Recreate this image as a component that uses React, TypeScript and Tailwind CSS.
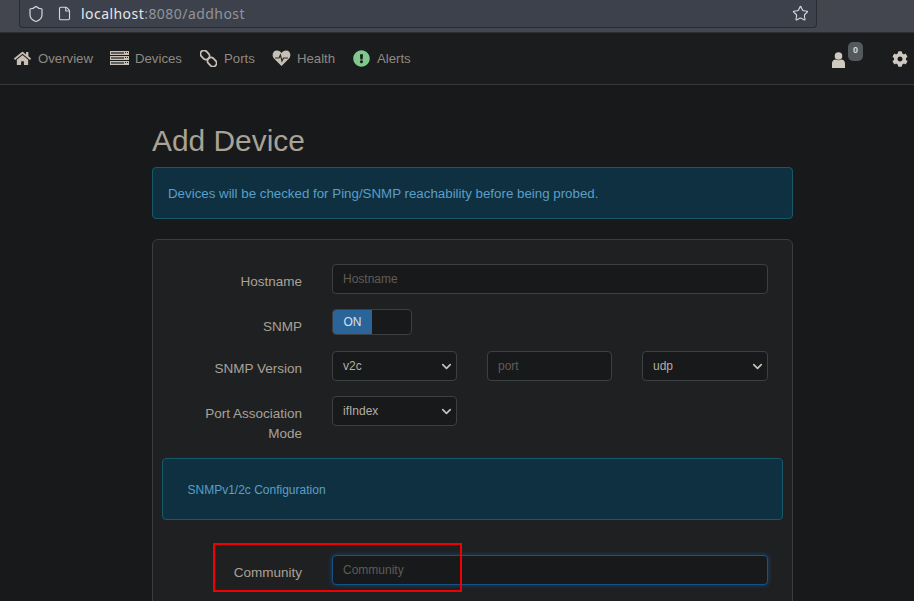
import { ChevronDown, File, Shield, Star } from "lucide-react";
import { FaCog, FaExclamationCircle, FaHome } from "react-icons/fa";

const ServerIcon = () => (
  <svg width="19" height="14" viewBox="0 0 19 14">
    {[0, 5, 10].map((y) => (
      <g key={y}>
        <rect x="0" y={y} width="19" height="4" fill="#c8c0b5" />
        <rect x="1" y={y + 1} width="13" height="2" fill="#5f5f5e" />
        <rect x="15" y={y + 1} width="1" height="1" fill="#1b1c1e" />
        <rect x="17" y={y + 1} width="1" height="1" fill="#1b1c1e" />
      </g>
    ))}
  </svg>
);

const ChainIcon = () => (
  <svg width="17" height="17" viewBox="0 0 17 17" fill="none" stroke="#c8c0b5" strokeWidth="1.8">
    <rect x="0" y="1.5" width="10" height="7" rx="3.5" transform="rotate(45 5 5)" />
    <rect x="7" y="8.5" width="10" height="7" rx="3.5" transform="rotate(45 12 12)" />
  </svg>
);

const HeartIcon = () => (
  <svg width="19" height="16" viewBox="0 0 19 16">
    <path
      d="M9.5 16 L2 8.5 C-0.7 5.5 0.8 0.5 5 0.5 C7 0.5 8.5 1.5 9.5 3 C10.5 1.5 12 0.5 14 0.5 C18.2 0.5 19.7 5.5 17 8.5 Z"
      fill="#c8c0b5"
    />
    <polyline points="3,8 7,8 8.4,5 10,11 11.5,8 16,8" fill="none" stroke="#2a2b2c" strokeWidth="1.2" />
  </svg>
);

const UserIcon = () => (
  <svg width="13" height="16" viewBox="0 0 13 16" fill="#cfc9bf">
    <circle cx="6.5" cy="4" r="3.8" />
    <path d="M0 16 V11.5 C0 9 1.8 7.5 3.6 7.5 C5.4 8.6 7.6 8.6 9.4 7.5 C11.2 7.5 13 9 13 11.5 V16 Z" />
  </svg>
);

const navItems = [
  { label: "Overview", icon: <FaHome className="size-[17px] text-[#c8c0b5]" />, width: "w-[96px]", box: "w-[24px]" },
  { label: "Devices", icon: <ServerIcon />, width: "w-[90px]", box: "w-[25px]" },
  { label: "Ports", icon: <ChainIcon />, width: "w-[72px]", box: "w-[24px]" },
  { label: "Health", icon: <HeartIcon />, width: "w-[81px]", box: "w-[25px]" },
  { label: "Alerts", icon: <FaExclamationCircle className="size-[17px] text-[#7fc98f]" />, width: "w-[58px]", box: "w-[24px]" },
];

const Select = ({ value, className }: { value: string; className: string }) => (
  <div
    className={`flex h-[30px] items-center justify-between rounded-[4px] border border-[#3d4043] bg-[#18191b] pl-[10px] pr-[2px] text-[12px] text-[#b5aea3] ${className}`}
  >
    <span className="-mt-[1px]">{value}</span>
    <ChevronDown className="size-[15px] text-[#c8c3ba]" strokeWidth={2.6} />
  </div>
);

const Field = ({ placeholder, className }: { placeholder: string; className: string }) => (
  <div
    className={`flex h-[30px] items-center rounded-[4px] border bg-[#18191b] pl-[10px] text-[12px] text-[#5f5c57] ${className}`}
  >
    <span className="-mt-[1px]">{placeholder}</span>
  </div>
);

const Label = ({ children, className = "" }: { children: React.ReactNode; className?: string }) => (
  <label className={`w-[140px] shrink-0 pl-[15px] pt-[8px] text-right text-[13.5px] leading-[20px] text-[#a8a297] ${className}`}>
    {children}
  </label>
);

export default function App() {
  return (
    <div className="relative h-[601px] w-[914px] overflow-hidden bg-[#18191b] font-['Liberation_Sans',sans-serif]">
      {/* browser chrome */}
      <div className="h-[33px] border-b border-[#2c2e33] bg-[#43464f] px-[19px]">
        <div className="flex h-[28px] w-[798px] items-center rounded-b-[4px] border border-t-0 border-[#2a2c31] bg-[#3d414c] pl-[7px] pr-[7px] font-['Noto_Sans',sans-serif] text-[14px]">
          <Shield className="size-[18px] text-[#d5d7dc]" strokeWidth={1.6} />
          <File className="ml-[12px] size-[15px] text-[#d5d7dc]" strokeWidth={1.8} />
          <span className="ml-[9px] tracking-[0.45px] text-[#e6e7ea]">localhost</span>
          <span className="tracking-[0.45px] text-[#92949b]">:8080/addhost</span>
          <Star className="ml-auto size-[17px] text-[#d5d7dc]" strokeWidth={1.6} />
        </div>
      </div>

      {/* navbar */}
      <nav className="flex h-[52px] items-center border-b border-[#35373a] bg-[#1b1c1e] pl-[14px] text-[13.2px] text-[#8f8a80]">
        {navItems.map((item) => (
          <a key={item.label} className={`flex shrink-0 items-center ${item.width}`}>
            <span className={`flex shrink-0 items-center ${item.box}`}>{item.icon}</span>
            <span>{item.label}</span>
          </a>
        ))}
        <div className="relative ml-auto mr-[47px] mt-[2px]">
          <UserIcon />
          <span className="absolute -top-[10px] left-[16px] flex h-[19px] w-[15px] items-center justify-center rounded-[5px] bg-[#54595c] text-[9px] font-bold text-[#d5dde0]">
            0
          </span>
        </div>
        <FaCog className="mr-[6px] size-[16px] text-[#cfc9bf]" />
      </nav>

      <main className="ml-[152px] w-[641px]">
        <h1 className="mt-[38px] text-[29.9px] leading-[36px] text-[#a9a297]">Add Device</h1>
        <div className="mt-[8px] flex h-[52px] items-center rounded-[4px] border border-[#16596b] bg-[#0f3040] pl-[15px] pt-[1px] text-[13.32px] text-[#5a9fc8]">
          Devices will be checked for Ping/SNMP reachability before being probed.
        </div>

        <section className="mt-[20px] h-[400px] rounded-[6px] border border-[#3a3c3f] bg-[#1f2022] px-[9px] pt-[24px]">
          <div className="flex items-start gap-[30px]">
            <Label>Hostname</Label>
            <Field placeholder="Hostname" className="w-[436px] border-[#3d4043]" />
          </div>

          <div className="mt-[15px] flex items-start gap-[30px]">
            <Label>SNMP</Label>
            <div className="flex h-[26px] w-[80px] overflow-hidden rounded-[4px] border border-[#3d4043] bg-[#18191b] text-[12px] text-[#d8e2ea]">
              <span className="flex w-[39px] items-center justify-center bg-[#2b6499]">ON</span>
            </div>
          </div>

          <div className="mt-[14px] flex items-start gap-[30px]">
            <Label>SNMP Version</Label>
            <Select value="v2c" className="w-[125px]" />
            <Field placeholder="port" className="w-[125px] border-[#3d4043]" />
            <Select value="udp" className="w-[126px]" />
          </div>

          <div className="mt-[15px] flex items-start gap-[30px]">
            <Label>Port Association Mode</Label>
            <Select value="ifIndex" className="w-[125px]" />
          </div>

          <div className="mt-[14px] flex h-[62px] w-[621px] items-center rounded-[4px] border border-[#16596b] bg-[#0f3040] pl-[24.5px] pt-[1px] text-[12px] text-[#5a9fc8]">
            SNMPv1/2c Configuration
          </div>

          <div className="mt-[35px] flex items-start gap-[30px]">
            <Label>Community</Label>
            <Field
              placeholder="Community"
              className="w-[436px] border-[#14538a] shadow-[0_0_5px_rgba(24,100,170,0.55)]"
            />
          </div>
        </section>
      </main>

      {/* annotation box drawn over the screenshot */}
      <div className="absolute left-[213px] top-[543px] h-[49px] w-[249px] border-2 border-[#f00000]" />
    </div>
  );
}
